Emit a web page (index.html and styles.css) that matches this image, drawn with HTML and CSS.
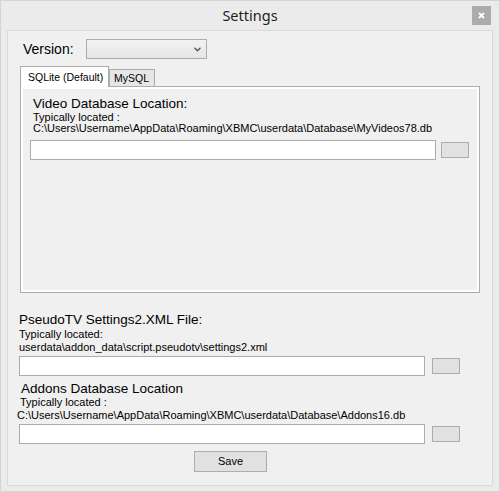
FILE: index.html
```html
<!DOCTYPE html>
<html>
<head>
<meta charset="utf-8">
<title>Settings</title>
<link rel="stylesheet" href="styles.css">
</head>
<body>
<div class="window">
  <div class="titlebar">
    <span class="spacer"></span>
    <div class="title">Settings</div>
    <div class="close">
      <svg width="19" height="19" viewBox="0 0 19 19"><path d="M7 7 L12 12 M12 7 L7 12" stroke="#fff" stroke-width="1.8" fill="none"/></svg>
    </div>
  </div>
  <div class="client">
    <div class="version-row">
      <span class="version-label">Version:</span>
      <div class="select">
        <svg width="7" height="5" viewBox="0 0 7 5"><path d="M0.5 0.8 L3.5 3.8 L6.5 0.8" stroke="#555" stroke-width="1.4" fill="none"/></svg>
      </div>
    </div>
    <div class="tabs">
      <div class="tab active">SQLite (Default)</div>
      <div class="tab">MySQL</div>
    </div>
    <div class="panel">
      <div class="label">Video Database Location:</div>
      <div class="note short">Typically located :</div>
      <div class="path">C:\Users\Username\AppData\Roaming\XBMC\userdata\Database\MyVideos78.db</div>
      <div class="field-row video-row">
        <div class="input"></div>
        <div class="browse"></div>
      </div>
    </div>
    <div class="section">
      <div class="label pseudo-label">PseudoTV Settings2.XML File:</div>
      <div class="note tight">Typically located:</div>
      <div class="path tight">userdata\addon_data\script.pseudotv\settings2.xml</div>
      <div class="field-row lower-row">
        <div class="input"></div>
        <div class="browse"></div>
      </div>
      <div class="label addons-label">Addons Database Location</div>
      <div class="note addons-note">Typically located :</div>
      <div class="path addons-path">C:\Users\Username\AppData\Roaming\XBMC\userdata\Database\Addons16.db</div>
      <div class="field-row lower-row">
        <div class="input"></div>
        <div class="browse"></div>
      </div>
      <div class="save">Save</div>
    </div>
  </div>
</div>
</body>
</html>
```

FILE: styles.css
```css
html, body {
  margin: 0;
  padding: 0;
  background: #ffffff;
}

.window {
  width: 500px;
  height: 492px;
  box-sizing: border-box;
  border: 1px solid #d4d4d4;
  background: #ebebeb;
  display: flex;
  flex-direction: column;
  font-family: "Liberation Sans", Arial, sans-serif;
  color: #000;
}

.titlebar {
  height: 29px;
  flex: none;
  display: grid;
  grid-template-columns: 1fr auto 1fr;
  align-items: center;
}

.title {
  font-family: "Noto Sans", "Open Sans", sans-serif;
  font-size: 14.5px;
  line-height: 20px;
  color: #1e1e1e;
  margin-top: -2px;
}

.close {
  justify-self: end;
  width: 19px;
  height: 19px;
  margin-right: 8px;
  background: #ababab;
  display: flex;
}

.client {
  flex: 1;
  margin: 0 6px 5px 6px;
  border: 1px solid #dadada;
  background: #f0f0f0;
  display: flex;
  flex-direction: column;
}

.version-row {
  display: flex;
  align-items: center;
  height: 20px;
  margin: 8px 0 0 15px;
}

.version-label {
  width: 63px;
  font-size: 14px;
  line-height: 16px;
}

.select {
  width: 121px;
  height: 20px;
  box-sizing: border-box;
  border: 1px solid #acacac;
  background: linear-gradient(#f2f2f2, #e6e6e6);
  display: flex;
  align-items: center;
  justify-content: flex-end;
  padding-right: 5px;
}

.tabs {
  display: flex;
  align-items: flex-end;
  margin: 7px 0 0 12px;
}

.tab {
  font-size: 10.5px;
  box-sizing: border-box;
  height: 17px;
  line-height: 16px;
  border: 1px solid #acacac;
  border-bottom: none;
  background: #e6e6e6;
  padding: 0 5px 0 4px;
  white-space: nowrap;
}

.tab.active {
  width: 89px;
  height: 21px;
  line-height: 20px;
  padding: 0 0 0 7px;
  background: #ffffff;
  margin-bottom: -1px;
  position: relative;
  z-index: 1;
}

.panel {
  margin-left: 12px;
  width: 460px;
  height: 207px;
  box-sizing: border-box;
  border: 1px solid #acacac;
  background: #f0f0f0;
  box-shadow: inset 0 0 0 2px #ffffff;
  padding: 9px 9px 0 9px;
}

.label {
  font-size: 13.5px;
  line-height: 15px;
  margin-left: 3px;
  white-space: nowrap;
}

.note {
  font-size: 11px;
  line-height: 12px;
  margin-left: 3px;
  white-space: nowrap;
}

.note.short {
  line-height: 10px;
  margin-top: 1px;
}

.path {
  font-size: 11px;
  line-height: 12px;
  margin-left: 3px;
  white-space: nowrap;
}

.field-row {
  display: flex;
  align-items: center;
}

.video-row {
  margin-top: 6px;
  gap: 5px;
}

.input {
  width: 406px;
  height: 20px;
  box-sizing: border-box;
  border: 1px solid #acacac;
  background: #ffffff;
}

.browse {
  width: 28px;
  height: 16px;
  box-sizing: border-box;
  border: 1px solid #adadad;
  background: #e1e1e1;
}

.section {
  margin-left: 11px;
  display: flex;
  flex-direction: column;
}

.section .label,
.section .note,
.section .path {
  margin-left: 0;
}

.pseudo-label {
  margin-top: 19px;
}

.note.tight {
  margin-top: 1px;
}

.path.tight {
  margin-top: 1px;
}

.lower-row {
  margin-top: 3px;
  gap: 7px;
}

.section .addons-label {
  margin-top: 5px;
  margin-left: 2px;
}

.section .addons-note {
  margin-left: 1px;
}

.section .addons-path {
  margin-top: 1px;
  margin-left: -2px;
}

.save {
  margin: 7px 0 0 175px;
  width: 73px;
  height: 21px;
  box-sizing: border-box;
  border: 1px solid #adadad;
  background: #e1e1e1;
  font-size: 11px;
  line-height: 19px;
  text-align: center;
}
```
